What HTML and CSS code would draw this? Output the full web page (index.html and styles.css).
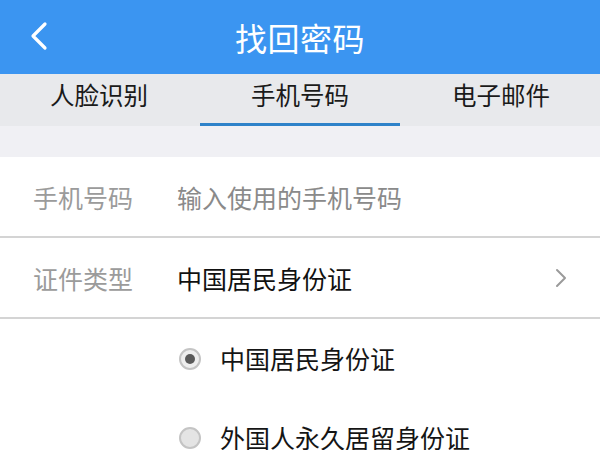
FILE: index.html
```html
<!DOCTYPE html>
<html lang="zh">
<head>
<meta charset="utf-8">
<title>找回密码</title>
<link rel="stylesheet" href="styles.css">
</head>
<body>
<div class="app">
  <header class="topbar">
    <svg class="back" width="22" height="30" viewBox="0 0 22 30"><path d="M17 3 L5 15 L17 27" fill="none" stroke="#fff" stroke-width="3.2" stroke-linecap="round" stroke-linejoin="round"/></svg>
    <h1 class="title">找回密码</h1>
  </header>
  <nav class="tabs">
    <div class="tab">人脸识别</div>
    <div class="tab active">手机号码</div>
    <div class="tab">电子邮件</div>
  </nav>
  <div class="spacer"></div>
  <div class="form">
    <div class="row">
      <span class="label">手机号码</span>
      <span class="placeholder">输入使用的手机号码</span>
    </div>
    <div class="row">
      <span class="label">证件类型</span>
      <span class="value">中国居民身份证</span>
      <svg class="chev" width="14" height="22" viewBox="0 0 14 22"><path d="M3 3 L11 11 L3 19" fill="none" stroke="#9a9a9a" stroke-width="2" stroke-linecap="round" stroke-linejoin="round"/></svg>
    </div>
    <div class="option">
      <span class="radio checked"></span>
      <span class="opt-text">中国居民身份证</span>
    </div>
    <div class="option last">
      <span class="radio"></span>
      <span class="opt-text">外国人永久居留身份证</span>
    </div>
  </div>
</div>
</body>
</html>
```
FILE: styles.css
```css
* { box-sizing: border-box; margin: 0; padding: 0; }
html, body { width: 600px; height: 450px; overflow: hidden; }
body {
  background: #fff;
  font-family: "Noto Sans CJK SC", "Noto Sans", sans-serif;
}
.app { width: 600px; }
.topbar {
  height: 74px;
  background: #3b95f1;
  display: flex;
  align-items: center;
  justify-content: center;
  position: relative;
}
.back { position: absolute; left: 28px; top: 21px; }
.title {
  color: #fff;
  font-size: 32px;
  font-weight: 400;
  letter-spacing: 0.5px;
}
.tabs {
  height: 52px;
  background: #e8e9ec;
  display: grid;
  grid-template-columns: 200px 200px 200px;
}
.tab {
  display: flex;
  justify-content: center;
  align-items: center;
  padding-bottom: 8px;
  font-size: 24.5px;
  color: #1a1a1a;
  border-bottom: 3px solid transparent;
}
.tab:first-child { justify-content: flex-start; padding-left: 50px; }
.tab:last-child { justify-content: flex-end; padding-right: 50px; }
.tab.active { border-bottom-color: #2e82c9; }
.spacer { height: 31px; background: #f0f0f4; }
.form { background: #fff; }
.row {
  height: 81px;
  display: flex;
  align-items: center;
  border-bottom: 2px solid #d4d4d4;
  padding-left: 33px;
  padding-right: 32px;
  font-size: 25px;
}
.label { color: #9b9b9b; width: 144px; }
.placeholder { color: #8a8a8a; }
.value { color: #111; flex: 1; }
.option {
  height: 79px;
  display: flex;
  align-items: center;
  padding-left: 179px;
  font-size: 25px;
  line-height: 1;
  color: #151515;
}
.option.last { height: 53px; padding-top: 26px; }
.radio {
  width: 22px;
  height: 22px;
  border-radius: 50%;
  border: 2px solid #c4c4c4;
  background: #e4e4e4;
  margin-right: 19px;
  display: flex;
  align-items: center;
  justify-content: center;
}
.radio.checked { background: #eeeeee; }
.radio.checked::after {
  content: "";
  width: 10px;
  height: 10px;
  border-radius: 50%;
  background: #5a5a5a;
}
```
